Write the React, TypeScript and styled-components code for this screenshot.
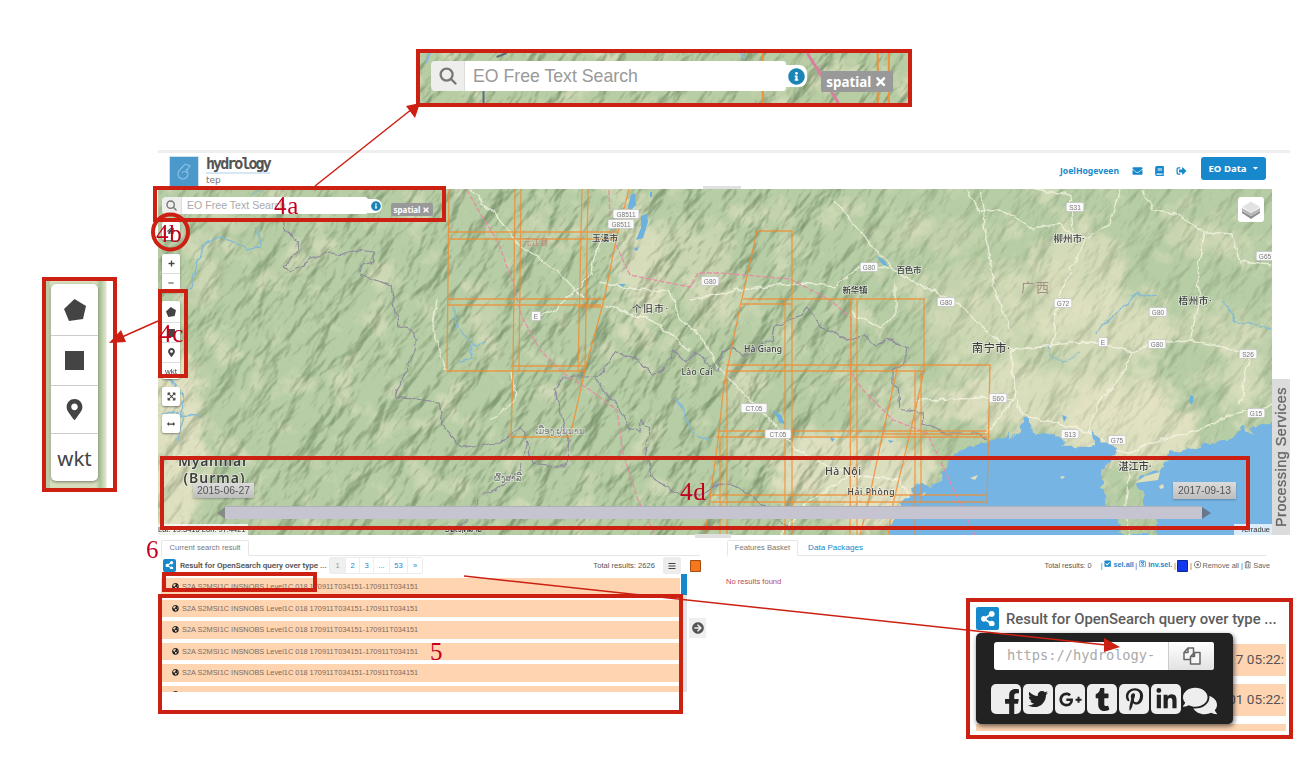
import React from "react";
import styled, { createGlobalStyle, css } from "styled-components";
import {
  FaSearch, FaInfoCircle, FaShareAlt, FaFacebookF, FaTwitter, FaTumblr, FaPinterestP,
  FaLinkedinIn, FaComments, FaEnvelope, FaBook, FaSignOutAlt, FaBars, FaMapMarkerAlt,
  FaGlobeAmericas, FaTimes, FaPlus, FaMinus, FaCaretDown,
  FaExpandArrowsAlt, FaRegTrashAlt, FaRegSave, FaCheckSquare, FaArrowCircleRight, FaRegDotCircle,
  FaGooglePlusG, FaArrowsAltH, FaHome,
} from "react-icons/fa";

const RED = "#cc2013";
const BLUE = "#1788cb";
const PEACH = "#fed4b1";

const Global = createGlobalStyle`
  * { box-sizing: border-box; }
  body { margin: 0; background: #fff; font-family: "Liberation Sans", sans-serif; }
`;

const Page = styled.main`
  position: relative;
  width: 1314px;
  height: 774px;
  padding: 150px 0 0 158px;
  overflow: hidden;
  background: #fff;
`;

/* ---------- header ---------- */
const Header = styled.header`
  display: flex;
  align-items: center;
  width: 1132px;
  height: 39px;
  padding: 0 24px 0 12px;
  border-top: 3px solid #eee;
`;
const Logo = styled.div`
  width: 28px;
  height: 29px;
  padding: 3px;
  background: #4b98cb;
  box-shadow: 0 0 0 1px #cfe2ef;
`;
const Brand = styled.div`
  margin: -3px auto 0 8px;
  color: #555;
  line-height: 1;
`;
const BrandName = styled.div`
  height: 19px;
  font: 700 15px/19px "DejaVu Sans Mono", monospace;
  letter-spacing: -1.95px;
  border-bottom: 2px solid #d5e6f4;
`;
const BrandSub = styled.div`
  margin-top: 1px;
  font: 9px/10px "DejaVu Sans", sans-serif;
  color: #777;
`;
const UserNav = styled.nav`
  display: flex;
  align-items: center;
  color: ${BLUE};
  font: 700 8.6px "Noto Sans", sans-serif;
  > svg { width: 11px; height: 10px; margin-left: 11px; }
  > svg:first-of-type { margin-left: 13px; }
  > svg:last-of-type { margin-right: 14px; }
`;
const DataButton = styled.button`
  display: flex;
  align-items: center;
  justify-content: center;
  gap: 5px;
  width: 65px;
  height: 23px;
  margin-top: -6px;
  padding: 0;
  border: 0;
  border-radius: 3px;
  background: ${BLUE};
  color: #fff;
  font: 700 9.6px "Noto Sans", sans-serif;
  svg { width: 7px; height: 8px; }
`;

/* ---------- map ---------- */
const MapRow = styled.div`
  display: flex;
  align-items: flex-end;
  height: 346px;
`;
const MapView = styled.section`
  position: relative;
  width: 1114px;
  height: 346px;
`;
const MapCanvas = styled.svg`
  position: absolute;
  inset: 0;
  width: 100%;
  height: 100%;
`;
const SideTab = styled.aside`
  display: flex;
  align-items: center;
  justify-content: center;
  width: 18px;
  height: 156px;
  background: #dcdcdc;
  color: #666;
  font: 14.4px/18px "Liberation Sans", sans-serif;
  letter-spacing: 0.5px;
  -webkit-text-stroke: 0.3px #666;
  writing-mode: vertical-rl;
  transform: rotate(180deg);
  white-space: nowrap;
`;
const Handle = styled.i<{ $x: number; $y: number; $w: number; $h: number }>`
  position: absolute;
  left: ${(p) => p.$x}px;
  top: ${(p) => p.$y}px;
  width: ${(p) => p.$w}px;
  height: ${(p) => p.$h}px;
  background: #e0e0e0;
`;
const MapSearch = styled.div`
  position: absolute;
  left: 4px;
  top: 8px;
`;
const MapControls = styled.div`
  position: absolute;
  left: 4px;
  top: 33px;
  display: flex;
  flex-direction: column;
`;
const ControlGroup = styled.div<{ $gap?: number }>`
  display: flex;
  flex-direction: column;
  width: 18px;
  margin-bottom: ${(p) => p.$gap ?? 8}px;
  border-radius: 2px;
  background: #fff;
  box-shadow: 0 1px 2px rgba(0, 0, 0, 0.4);
`;
const Control = styled.button<{ $h?: number }>`
  display: flex;
  align-items: center;
  justify-content: center;
  height: ${(p) => p.$h ?? 19}px;
  padding: 0;
  border: 0;
  background: none;
  color: #444;
  font: 8px "Liberation Sans", sans-serif;
  & + & { border-top: 1px solid #ddd; }
`;
const LayersButton = styled.button`
  position: absolute;
  right: 8px;
  top: 8px;
  display: grid;
  place-items: center;
  width: 26px;
  height: 25px;
  padding: 0;
  border: 0;
  border-radius: 3px;
  background: #fff;
`;
const TimeLabel = styled.div<{ $x: number; $y: number; $w: number; $h: number }>`
  position: absolute;
  left: ${(p) => p.$x}px;
  top: ${(p) => p.$y}px;
  width: ${(p) => p.$w}px;
  height: ${(p) => p.$h}px;
  background: linear-gradient(#dcdcdc, #bdbdbd);
  color: #555;
  font: 10.4px/${(p) => p.$h}px "Liberation Sans", sans-serif;
  text-align: center;
  box-shadow: 0 1px 2px rgba(0, 0, 0, 0.25);
`;
const TimeBar = styled.div`
  position: absolute;
  left: 67px;
  top: 317px;
  width: 977px;
  height: 13px;
  background: #c5c4d0;
  border-top: 1px solid #aeb0b8;
  &::before, &::after {
    content: "";
    position: absolute;
    top: 0;
    border: 6px solid transparent;
  }
  &::before { left: -8px; border-left: 0; border-right: 8px solid #858c84; }
  &::after { right: -9px; border-right: 0; border-left: 9px solid #66798a; }
`;
const Attribution = styled.div<{ $right?: boolean }>`
  position: absolute;
  bottom: 0;
  ${(p) => (p.$right ? css`right: 0; width: 38px; text-align: right; padding-right: 2px;` : css`left: 0; width: 90px;`)}
  height: 11px;
  overflow: hidden;
  background: rgba(255, 255, 255, 0.75);
  color: #333;
  font: 7.5px/11px "Liberation Sans", sans-serif;
  white-space: nowrap;
`;

/* ---------- search widget, drawn small on the map and large in its callout ---------- */
const Search = styled.div<{ $big?: boolean }>`
  display: flex;
  align-items: center;
  height: ${(p) => (p.$big ? 30 : 17)}px;
`;
const SearchIcon = styled.span<{ $big?: boolean }>`
  display: grid;
  place-items: center;
  flex: none;
  width: ${(p) => (p.$big ? 34 : 20)}px;
  height: 100%;
  border-right: 1px solid #ddd;
  border-radius: 4px 0 0 4px;
  background: #eeeeec;
  color: #777;
`;
const SearchInput = styled.span<{ $big?: boolean }>`
  flex: none;
  width: ${(p) => (p.$big ? 321 : 186)}px;
  height: 100%;
  padding-left: ${(p) => (p.$big ? 8 : 5)}px;
  border-radius: 0 3px 3px 0;
  background: #fff;
  color: ${(p) => (p.$big ? "#999" : "#aaa")};
  font: ${(p) => (p.$big ? "17.7px/30px" : "10.6px/17px")} "Liberation Sans", sans-serif;
  white-space: nowrap;
`;
const SearchInfo = styled.span<{ $big?: boolean }>`
  display: flex;
  align-items: center;
  justify-content: flex-end;
  flex: none;
  width: ${(p) => (p.$big ? 21 : 14)}px;
  height: ${(p) => (p.$big ? 22 : 14)}px;
  padding-right: ${(p) => (p.$big ? 2 : 1)}px;
  border-radius: 0 8px 8px 0;
  background: #fff;
  color: #1a84b4;
  font-size: ${(p) => (p.$big ? 17 : 10)}px;
`;
const Badge = styled.span<{ $big?: boolean }>`
  display: flex;
  align-items: center;
  justify-content: center;
  flex: none;
  gap: ${(p) => (p.$big ? 3 : 2)}px;
  width: ${(p) => (p.$big ? 72 : 42)}px;
  height: ${(p) => (p.$big ? 21 : 13)}px;
  margin: ${(p) => (p.$big ? "11px 0 0 14px" : "8px 0 0 9px")};
  border-radius: 2px;
  background: #999;
  color: #fff;
  font: 700 ${(p) => (p.$big ? "13.4px" : "8px")} "Noto Sans", sans-serif;
`;

function SearchBox({ big }: { big?: boolean }) {
  const s = big ? 18 : 11;
  return (
    <Search $big={big}>
      <SearchIcon $big={big}>
        <svg width={s} height={s} viewBox="0 0 18 18" fill="none" stroke="#777" strokeWidth="2.3" strokeLinecap="round">
          <circle cx="7.6" cy="7.6" r="6" /><path d="M12 12 16.5 16.5" />
        </svg>
      </SearchIcon>
      <SearchInput $big={big}>EO Free Text Search</SearchInput>
      <SearchInfo $big={big}><FaInfoCircle /></SearchInfo>
      <Badge $big={big}>spatial <FaTimes /></Badge>
    </Search>
  );
}

/* ---------- bottom panels ---------- */
const Panels = styled.div`
  display: flex;
  padding-top: 5px;
  color: #666;
  font: 7.6px "Liberation Sans", sans-serif;
`;
const Panel = styled.section<{ $w: number; $ml?: number }>`
  width: ${(p) => p.$w}px;
  margin-left: ${(p) => p.$ml ?? 0}px;
`;
const Tabs = styled.div`
  display: flex;
  width: 539px;
  height: 16px;
  border-bottom: 1px solid #e6e6e6;
`;
const Tab = styled.span<{ $w: number; $active?: boolean }>`
  width: ${(p) => p.$w}px;
  height: 16px;
  line-height: 14px;
  text-align: center;
  white-space: nowrap;
  color: ${(p) => (p.$active ? "#777" : BLUE)};
  ${(p) => (p.$active ? css`border: 1px solid #e6e6e6; border-bottom-color: #fff; border-radius: 2px 2px 0 0;` : css`padding-top: 1px; font-size: 8.1px;`)}
`;
const Toolbar = styled.div`
  display: flex;
  align-items: center;
  height: 18px;
  white-space: nowrap;
`;
const ShareIcon = styled.span<{ $s: number }>`
  display: grid;
  place-items: center;
  width: ${(p) => p.$s}px;
  height: ${(p) => p.$s}px;
  border-radius: 2px;
  background: ${BLUE};
  color: #fff;
  font-size: ${(p) => p.$s * 0.68}px;
`;
const ResultTitle = styled.span`
  width: 153px;
  padding-left: 4px;
  color: #555;
  font: 500 8.05px Roboto, sans-serif;
  -webkit-text-stroke: 0.1px #555;
`;
const Pager = styled.div`
  display: flex;
  height: 17px;
  border: 1px solid #ececec;
  border-radius: 2px;
`;
const PageNo = styled.span<{ $w: number; $on?: boolean }>`
  width: ${(p) => p.$w}px;
  line-height: 16px;
  text-align: center;
  color: ${(p) => (p.$on ? "#999" : BLUE)};
  background: ${(p) => (p.$on ? "#f0f0f0" : "#fff")};
  & + & { border-left: 1px solid #eee; }
`;
const Total = styled.span`
  margin-left: auto;
  color: #555;
`;
const ListButton = styled.button`
  display: grid;
  place-items: center;
  width: 18px;
  height: 17px;
  margin: 1px 9px 0 8px;
  padding: 0;
  border: 0;
  border-radius: 2px;
  background: #ececec;
  color: #444;
  font-size: 8px;
`;
const Swatch = styled.i<{ $c: string }>`
  width: 11px;
  height: 12px;
  margin-top: 1px;
  border: 1px solid rgba(0, 0, 0, 0.35);
  border-radius: 1px;
  background: ${(p) => p.$c};
`;
const ResultArea = styled.div`
  display: flex;
  height: 118px;
`;
const Rows = styled.ul`
  display: flex;
  flex-direction: column;
  gap: 4px;
  width: 519px;
  height: 114px;
  margin: 4px 1px 0 0;
  padding: 0;
  overflow: hidden;
  list-style: none;
`;
const Row = styled.li`
  display: flex;
  flex: none;
  align-items: center;
  gap: 3px;
  height: 17.5px;
  padding-left: 11px;
  background: ${PEACH};
  color: #7b6c62;
  font-size: 7.36px;
  white-space: nowrap;
  svg { color: #222; width: 7px; height: 7px; }
`;
const Scroll = styled.div`
  width: 6px;
  height: 118px;
  background: linear-gradient(${BLUE} 0 21px, #e2e2e2 21px);
`;
const MoveButton = styled.button`
  align-self: flex-start;
  display: grid;
  place-items: center;
  width: 17px;
  height: 20px;
  margin: 44px 0 0 2px;
  padding: 0;
  border: 0;
  background: #efefef;
  color: #555;
  font-size: 12px;
`;
const Empty = styled.p`
  margin: 3px 0 0 -1px;
  color: #b94a5c;
`;
const BasketTools = styled.span`
  display: flex;
  align-items: center;
  gap: 1.6px;
  margin: 0 -4px 0 9px;
  b { color: ${BLUE}; }
`;
const Compact = styled(Toolbar)`
  font-size: 7.3px;
`;

/* ---------- figure annotations ---------- */
interface Rect { $x: number; $y: number; $w: number; $h: number }
const Frame = styled.div<Rect & { $fill?: boolean }>`
  position: absolute;
  left: ${(p) => p.$x}px;
  top: ${(p) => p.$y}px;
  width: ${(p) => p.$w}px;
  height: ${(p) => p.$h}px;
  border: 4px solid ${RED};
  ${(p) => p.$fill && css`background: #fff;`}
`;
const Label = styled.span<{ $x: number; $y: number }>`
  position: absolute;
  left: ${(p) => p.$x}px;
  top: ${(p) => p.$y}px;
  color: #c4001a;
  font: 25px/26px "Liberation Serif", serif;
  letter-spacing: 0.8px;
`;
const Overlay = styled.svg`
  position: absolute;
  left: 0;
  top: 0;
  pointer-events: none;
`;
const SearchCallout = styled(Frame)`
  z-index: 0;
  padding: 8px 0 0 11px;
`;
const CalloutCanvas = styled(MapCanvas)`
  z-index: -1;
`;
const ToolCallout = styled(Frame)`
  padding: 3px 0 0 5px;
  background: linear-gradient(90deg, #bccba5 0 4px, #d7ddbd 4px 50px, #a9c49a 54px, #e3e5cc 60px, #fff 61px);
`;
const Tools = styled.div`
  width: 47px;
  border-radius: 5px;
  background: #fff;
  box-shadow: 0 1px 3px rgba(0, 0, 0, 0.45);
`;
const Tool = styled.div<{ $h: number }>`
  display: grid;
  place-items: center;
  height: ${(p) => p.$h}px;
  color: #444;
  font: 20.5px "Noto Sans", sans-serif;
  & + & { border-top: 1px solid #ccc; }
`;
const ShareCallout = styled(Frame)`
  padding: 5px 3px 0 6px;
`;
const ShareTitle = styled.div`
  display: flex;
  align-items: center;
  gap: 7px;
  height: 23px;
  margin-bottom: 14px;
  color: #5c5c5c;
  font: 500 14.85px Roboto, sans-serif;
  white-space: nowrap;
`;
const ShareRow = styled.div<{ $h: number }>`
  height: ${(p) => p.$h}px;
  margin-bottom: 8px;
  padding-right: 2px;
  background: ${PEACH};
  color: #555;
  font: 13.6px/${(p) => p.$h - 2}px Roboto, sans-serif;
  text-align: right;
`;
const Popover = styled.div`
  position: absolute;
  left: 6px;
  top: 31px;
  width: 257px;
  height: 91px;
  padding: 9px 15px 0 18px;
  border-radius: 5px;
  background: #222;
  box-shadow: 1px 2px 5px rgba(0, 0, 0, 0.6);
`;
const UrlField = styled.div`
  display: flex;
  width: 220px;
  height: 28px;
  overflow: hidden;
  border-radius: 3px;
  background: #fff;
  color: #aaa;
  font: 13.7px/27px "DejaVu Sans Mono", monospace;
  span { width: 174px; padding-left: 13px; }
`;
const CopyButton = styled.button`
  display: grid;
  place-items: center;
  width: 46px;
  padding: 0;
  border: 0;
  border-left: 1px solid #ccc;
  background: linear-gradient(#fff, #e2e2e2);
`;
const Socials = styled.div`
  display: flex;
  gap: 2px;
  margin: 14px 0 0 -3px;
`;
const Social = styled.span`
  display: grid;
  place-items: center;
  flex: none;
  width: 30px;
  height: 30px;
  border-radius: 5px;
  background: #eee;
  color: #222;
  font-size: 23px;
  &:first-child { padding: 5px 0 0 8px; font-size: 26px; overflow: hidden; }
  &:last-child { width: 34px; background: none; color: #eee; font-size: 34px; }
`;

/* ---------- map content ---------- */
const LANDS: [number, number, number, number, number][] = [
  [175, 440, 28, 100, 0.9], [220, 215, 22, 9, 0.5], [205, 270, 8, 45, 0.6], [310, 262, 28, 5, 0.4], [640, 270, 22, 75, 0.7],
  [690, 250, 40, 28, 0.45], [720, 300, 36, 30, 0.4], [990, 340, 60, 50, 0.35], [1080, 270, 46, 50, 0.65], [1110, 330, 70, 35, 0.7],
  [1205, 235, 40, 12, 0.5], [1060, 400, 110, 35, 0.75], [1130, 430, 70, 40, 0.9], [1180, 330, 90, 18, 0.3], [850, 470, 80, 38, 0.85],
  [900, 510, 55, 28, 0.95], [800, 440, 42, 12, 0.5], [920, 410, 70, 16, 0.5], [1245, 370, 20, 45, 0.6], [1000, 300, 90, 40, 0.3],
  [740, 395, 12, 50, 0.3], [480, 320, 12, 40, 0.3], [540, 230, 40, 10, 0.3], [930, 235, 80, 10, 0.3],
];
const ROADS = [
  "M965 189 976 205 980 212 1000 210 1012 215 1030 228 1060 224 1068 232 1085 240 1111 222 1120 189",
  "M1085 240 1082 250 1070 270 1058 300 1052 345 1012 350",
  "M1143 189 1152 210 1180 216 1205 233 1232 235 1240 262 1272 265",
  "M1205 233 1197 270 1200 300 1190 340 1175 343 1160 342 1132 352 1118 380 1100 400 1088 432",
  "M1012 350 1060 343 1100 342 1132 352 M1190 340 1215 345 1232 350 1250 355 1245 375 1240 405",
  "M1012 350 1014 395 1022 415 1060 425 1090 432 1125 455 1160 440 1200 430 1230 415 1272 405",
  "M1012 350 985 330 960 305 935 292 900 275 880 255 850 220 835 200",
  "M895 282 895 315 882 328 860 318 852 310 M835 285 845 280 860 267 894 268",
  "M600 282 640 290 670 292 680 320 700 335 722 372 770 420 800 452 850 475 860 510",
  "M605 230 590 275 575 292 555 310 537 316 M690 300 740 290 800 283 835 286",
  "M470 189 495 215 520 245 555 270 585 300 M690 350 650 320 605 305",
  "M1012 350 1014 400 985 435 M915 400 990 398 1014 400 M1035 189 1070 195 1073 230",
  "M850 475 900 480 920 520 M850 475 810 500 780 535",
  "M1130 465 1126 500 1128 535 M980 189 984 215 990 260 995 290 1010 330",
  "M512 370 515 400 490 420 M448 371 432 330 437 300",
];
const ORANGE = [
  "M449 189 447 371H585 M515 189 513 371 511 437H569 M521 189 519 371 M582 189 578 372 M588 189 585 370",
  "M629 189 616 240 604 300 585 370 570 437 M448 232H618 M448 239H616 M448 299H603 M448 305H601 M513 366H585 M578 307H601",
  "M757 231H792V535 M757 231 741 303 724 384 718 440 705 535 M785 299V535",
  "M743 299H924V371 M741 304H792 M726 365H990L987 504 M726 371H924 M851 299 850 535 M857 299V535",
  "M718 431H987 M716 437H987 M712 495H986 M711 502H986 M720 437V535 M727 371V535",
  "M898 365 882 437 868 504 860 535 M924 371 912 425 893 504 888 535 M915 371V535 M921 371V503 M882 434H987",
];
const BORDERS = [
  "M283 220 285 228 297 240 298 250 283 268 291 272 310 258 330 253 345 255 355 250 375 252 371 262 360 266 362 275 391 287 399 327 413 330 417 347 406 370 395 397 439 402 443 427 462 447 480 445 499 443 521 427 527 440 532 463 566 467 569 440 554 390 563 377 588 377 600 375 617 352 640 362 653 374 665 368 673 350 686 363 694 352 718 371 722 352 733 347 743 357 763 343 773 340 775 325 802 315 807 307 823 328 847 340 863 336 875 345 890 339 908 348 903 365 892 370 892 383 898 387 900 408 922 413 923 422 947 433 977 433 987 441",
  "M594 378 605 392 617 405 630 430 640 431 641 420 650 427 645 447 653 480 675 492 700 497 720 482 740 488 762 505 790 530",
  "M478 500 466 520 452 535 M527 440 521 470 495 490 480 495",
];
const SEA =
  "M888 535 893 519 903 503 917 483 928 486 940 480 945 468 952 455 960 450 975 446 987 442 1000 437 1010 433 1010 441 1020 430 1023 417 1027 417 1033 432 1045 434 1060 437 1066 443 1062 448 1080 447 1093 443 1092 430 1098 436 1103 443 1117 447 1115 457 1102 470 1102 490 1106 503 1117 513 1122 524 1118 535H1155L1157 520 1143 503 1148 497 1135 483 1137 477 1163 467 1170 453 1200 447 1213 443 1233 437 1243 425 1246 432 1257 435 1250 428 1285 420V550H888Z";
const LABELS: [string, number, number, number, number][] = [
  ["玉溪市", 605, 241, 8.5, 26], ["个旧市·", 650, 312, 9.5, 36], ["新华镇", 855, 293, 8.5, 25], ["百色市", 909, 273, 8.5, 25],
  ["柳州市·", 1069, 242, 9.5, 31], ["梧州市·", 1195, 304, 9.5, 33], ["南宁市·", 991, 352, 11, 38], ["湛江市·", 1135, 470, 10, 33],
  ["Hà Giang", 763, 352, 8.5, 38], ["Lào Cai", 697, 375, 8.5, 31], ["Hà Nội", 843, 475, 10.5, 36], ["Hải Phòng", 871, 495, 8.5, 47],
];
const SHIELDS: [string, number, number][] = [
  ["G8511", 626, 214], ["G8511", 621, 224], ["G80", 710, 281], ["G80", 869, 267], ["G80", 946, 302], ["G72", 1063, 303],
  ["S31", 1075, 207], ["G80", 1158, 312], ["G80", 1157, 344], ["G65", 1265, 256], ["S26", 1248, 354], ["G15", 1256, 413],
  ["G75", 1117, 440], ["S13", 1070, 434], ["S60", 998, 398], ["CT.05", 754, 408], ["CT.05", 778, 434], ["E", 536, 316], ["E", 1103, 342],
];

function Terrain() {
  return (
    <defs>
      <filter id="relief" x="0" y="0" width="100%" height="100%" colorInterpolationFilters="sRGB">
        <feTurbulence type="fractalNoise" baseFrequency="0.02 0.048" numOctaves="4" seed="8" />
        <feColorMatrix values="0 0 0 0 0  0 0 0 0 0  0 0 0 0 0  1 0 0 0 0" />
        <feDiffuseLighting surfaceScale="11" diffuseConstant="1.12" lightingColor="#fff">
          <feDistantLight azimuth="250" elevation="62" />
        </feDiffuseLighting>
        <feColorMatrix values=".5 0 0 0 .51  0 .42 0 0 .59  0 0 .5 0 .51  0 0 0 1 0" />
      </filter>
      <linearGradient id="fade" x1="158" x2="1272" y1="0" y2="90" gradientUnits="userSpaceOnUse">
        <stop offset="0" stopColor="#999" />
        <stop offset=".15" stopColor="#ddd" />
        <stop offset=".58" stopColor="#fff" />
        <stop offset=".72" stopColor="#777" />
        <stop offset="1" stopColor="#777" />
      </linearGradient>
      <mask id="height" maskUnits="userSpaceOnUse" x="158" y="189" width="1114" height="346">
        <rect x="158" y="189" width="1114" height="346" fill="url(#fade)" />
      </mask>
      <filter id="patches" x="0" y="0" width="100%" height="100%" colorInterpolationFilters="sRGB">
        <feTurbulence type="fractalNoise" baseFrequency="0.03" numOctaves="4" seed="21" />
        <feColorMatrix values="0 0 0 0 .89  0 0 0 0 .89  0 0 0 0 .77  5 0 0 0 -2.75" />
      </filter>
      <filter id="soft" x="-50%" y="-50%" width="200%" height="200%" colorInterpolationFilters="sRGB">
        <feGaussianBlur stdDeviation="6" result="b" />
        <feTurbulence type="fractalNoise" baseFrequency="0.05" numOctaves="3" seed="3" result="n" />
        <feDisplacementMap in="b" in2="n" scale="40" xChannelSelector="R" yChannelSelector="G" />
      </filter>
      <filter id="coast" colorInterpolationFilters="sRGB">
        <feTurbulence type="fractalNoise" baseFrequency="0.12" numOctaves="2" seed="5" result="n" />
        <feDisplacementMap in="SourceGraphic" in2="n" scale="9" xChannelSelector="R" yChannelSelector="G" />
      </filter>
      <filter id="wobble" colorInterpolationFilters="sRGB">
        <feTurbulence type="fractalNoise" baseFrequency="0.1" numOctaves="2" seed="9" result="n" />
        <feDisplacementMap in="SourceGraphic" in2="n" scale="7" xChannelSelector="R" yChannelSelector="G" />
      </filter>
    </defs>
  );
}

function RegionMap() {
  return (
    <MapCanvas viewBox="158 189 1114 346">
      <Terrain />
      <rect x="158" y="189" width="1114" height="346" fill="#b7cda5" />
      <rect x="158" y="189" width="1114" height="346" filter="url(#patches)" opacity="0.5" />
      <g filter="url(#soft)">
        {LANDS.map(([x, y, rx, ry, o], i) => (
          <ellipse key={i} cx={x} cy={y} rx={rx} ry={ry} fill="#e3e2c3" opacity={o} />
        ))}
      </g>
      <g style={{ mixBlendMode: "multiply" }} mask="url(#height)">
        <rect x="-200" y="-250" width="1700" height="1300" filter="url(#relief)" transform="rotate(-52 700 360)" opacity="0.72" />
      </g>
      <g fill="none" stroke="#fbf9ea" strokeWidth="1.4" opacity="0.7" filter="url(#wobble)">
        {ROADS.map((d) => <path key={d} d={d} />)}
      </g>
      <path d={SEA} fill="#76b5e3" filter="url(#coast)" />
      <path d="M1135 483 1145 476 1160 472 1158 480 1143 482Z M1159 486l4-2 1 4-4 1Z M1060 477l3-1 2 1-3 2Z M970 478l8-3-3 5Z M920 495l6-3-2 4Z" fill="#dde0bb" />
      <g fill="#6db2df">
        <path d="M631 195 635 193 636 205 630 211 628 207Z M641 216 647 214 648 222 643 238 636 240 641 228Z M633 249l6-2-2 4Z M618 284l8 0-3 3Z M650 192l2 0 0 5-2 0Z M773 410 781 415 785 424 780 423Z" />
        <path d="M830 437l5 2-3 3Z M888 440l6 1-4 2Z M1190 395l4 2-2 8-3-3Z M1062 415l5 2-3 5Z M876 256l8 4 4 6-5-1Z" />
      </g>
      <g fill="none" stroke="#84bbd2" strokeWidth="1.4" filter="url(#wobble)">
        <path d="M190 290 198 262 203 245 221 236 232 242 247 250 259 247 260 237 254 228" />
        <path d="M452 305 458 325 468 340 472 358 460 361 M472 346 485 343 M676 398 690 427 697 435 710 440" />
        <path d="M169 378 182 395 183 415 178 440 M160 413 200 415 M1095 333 1115 315 1138 293 1155 297 M1225 301 1235 322 1272 329" />
        <path d="M1048 345 1052 358 1066 362 1080 352 M250 196 262 191" opacity=".7" />
      </g>
      <g fill="none" stroke="#8d8a9c" strokeWidth="1.2" filter="url(#wobble)">
        {BORDERS.map((d) => <path key={d} d={d} />)}
      </g>
      <g fill="none" stroke="#e68da5" strokeWidth="1.3" strokeDasharray="5 2">
        <path d="M467 190 480 213 498 242 513 283 522 317 540 350 563 373 590 390 617 410 623 453 638 500 655 535" />
        <path d="M609 190 610 223 617 247 630 275 690 287 698 273H720L790 279 830 300 851 318V373L863 390 893 420 927 433 940 460 957 497 975 535" />
      </g>
      <g fill="none" stroke="#f58a2b" strokeWidth="1.3" opacity="0.78">
        {ORANGE.map((d) => <path key={d} d={d} />)}
      </g>
      {SHIELDS.map(([t, x, y], i) => {
        const w = t.length * 4.2 + 5;
        return (
          <g key={i}>
            <rect x={x - w / 2} y={y - 4.5} width={w} height="9" rx="1.5" fill="#fafafa" stroke="#bbb" strokeWidth="0.6" />
            <text x={x} y={y + 2.5} fontSize="6.5" fill="#777" textAnchor="middle" fontFamily="Liberation Sans, sans-serif">{t}</text>
          </g>
        );
      })}
      <g fill="#3f3f42" textAnchor="middle" fontWeight="500" fontFamily="'Noto Sans', 'Noto Sans CJK SC', sans-serif" stroke="#fff" strokeOpacity=".5" strokeWidth="1.6" paintOrder="stroke">
        {LABELS.map(([t, x, y, s, w]) => <text key={t} x={x} y={y} fontSize={s} textLength={w}>{t}</text>)}
        <text x="213" y="466" fontSize="14" textLength="70" fontWeight="600">Myanmar</text>
        <text x="214" y="483" fontSize="14" textLength="61" fontWeight="600">(Burma)</text>
        <text x="463" y="532" fontSize="8">ປະເທດລາວ</text>
        <text x="508" y="481" fontSize="9" fill="#777">ຜົ້ງສາລີ</text>
        <text x="560" y="434" fontSize="9" fill="#888">ເມືອງ ຢູນນານ</text>
      </g>
      <text x="1021" y="292" fontSize="13" fill="#a08f86" fontFamily="'Noto Sans CJK SC', sans-serif" textLength="28">广西</text>
      <text x="523" y="245" fontSize="8" fill="#c07f7c" fontFamily="'Noto Sans CJK SC', sans-serif" textLength="25">元江县</text>
    </MapCanvas>
  );
}

const RESULT = "S2A S2MSI1C INSNOBS Level1C 018 170911T034151-170911T034151";

const Pentagon = ({ size }: { size: number }) => (
  <svg width={size} height={size} viewBox="0 0 22 22"><path fill="#444" d="M10.5 0 22 7 19 20 5 22 0 10Z" /></svg>
);
const Square = ({ size }: { size: number }) => (
  <svg width={size} height={size} viewBox="0 0 20 20"><path fill="#444" d="M0 0H20V20H0Z" /></svg>
);

export default function App() {
  return (
    <Page>
      <Global />
      <Header>
        <Logo>
          <svg width="22" height="22" viewBox="0 0 22 22" fill="none" stroke="#8cc0e3" strokeWidth="1.2">
            <path d="M12 4C9 8 5 10 5 14a5 5 0 0 0 10 0c0-2-1-3-2-5 M12 4l5 2-3 4 M9 13c1-2 4-2 5 0" />
          </svg>
        </Logo>
        <Brand>
          <BrandName>hydrology</BrandName>
          <BrandSub>tep</BrandSub>
        </Brand>
        <UserNav>
          JoelHogeveen
          <FaEnvelope /><FaBook /><FaSignOutAlt />
          <DataButton>EO Data <FaCaretDown /></DataButton>
        </UserNav>
      </Header>

      <MapRow>
        <MapView>
          <RegionMap />
          <Handle $x={545} $y={-3} $w={38} $h={3} />
          <Handle $x={537} $y={345} $w={36} $h={4} />
          <MapSearch><SearchBox /></MapSearch>
          <MapControls>
            <ControlGroup $gap={14}><Control $h={18}><FaHome /></Control></ControlGroup>
            <ControlGroup $gap={9}>
              <Control><FaPlus size={7} /></Control>
              <Control><FaMinus size={6} /></Control>
            </ControlGroup>
            <ControlGroup $gap={8}>
              <Control $h={21}><Pentagon size={10} /></Control>
              <Control $h={20}><Square size={8} /></Control>
              <Control $h={20}><FaMapMarkerAlt size={9} /></Control>
              <Control $h={17}>wkt</Control>
            </ControlGroup>
            <ControlGroup><Control><FaExpandArrowsAlt size={9} /></Control></ControlGroup>
            <ControlGroup><Control><FaArrowsAltH size={8} /></Control></ControlGroup>
          </MapControls>
          <LayersButton>
            <svg width="20" height="20" viewBox="0 0 20 20">
              <path d="M1 11 10 16 19 11V13L10 19 1 13Z" fill="#8f8f8f" />
              <path d="M1 8 10 13 19 8V11L10 16 1 11Z" fill="#b8b8b8" />
              <path d="M1 7 10 1.5 19 7 10 12.5Z" fill="#e2e2e2" />
            </svg>
          </LayersButton>
          <TimeLabel $x={35} $y={294} $w={61} $h={15}>2015-06-27</TimeLabel>
          <TimeLabel $x={1015} $y={293} $w={63} $h={17}>2017-09-13</TimeLabel>
          <TimeBar />
          <Attribution>Lat: 19.5415 Lon: 97.4421</Attribution>
          <Attribution $right>Terradue</Attribution>
        </MapView>
        <SideTab>Processing Services</SideTab>
      </MapRow>

      <Panels>
        <Panel $w={550} $ml={3}>
          <Tabs><Tab $w={88} $active>Current search result</Tab></Tabs>
          <Toolbar>
            <i style={{ width: 2 }} />
            <ShareIcon $s={13}><FaShareAlt /></ShareIcon>
            <ResultTitle>Result for OpenSearch query over type ...</ResultTitle>
            <Pager>
              <PageNo $w={15} $on>1</PageNo><PageNo $w={14}>2</PageNo><PageNo $w={14}>3</PageNo>
              <PageNo $w={16}>...</PageNo><PageNo $w={18}>53</PageNo><PageNo $w={15}>»</PageNo>
            </Pager>
            <Total>Total results: 2626</Total>
            <ListButton><FaBars /></ListButton>
            <Swatch $c="#f7771c" />
            <i style={{ width: 10 }} />
          </Toolbar>
          <ResultArea>
            <Rows>
              {[0, 1, 2, 3, 4, 5].map((i) => <Row key={i}><FaGlobeAmericas />{RESULT}</Row>)}
            </Rows>
            <Scroll />
            <MoveButton><FaArrowCircleRight /></MoveButton>
          </ResultArea>
        </Panel>
        <Panel $w={539} $ml={16}>
          <Tabs><Tab $w={71} $active>Features Basket</Tab><Tab $w={75}>Data Packages</Tab></Tabs>
          <Compact>
            <Total>Total results: 0</Total>
            <BasketTools>
              | <b><FaCheckSquare /> sel.all</b> | <b><FaRegSave /> inv.sel.</b> |
              <Swatch $c="#1238ee" /> | <FaRegDotCircle /> Remove all | <FaRegTrashAlt /> Save
            </BasketTools>
          </Compact>
          <Empty>No results found</Empty>
        </Panel>
      </Panels>

      <SearchCallout $x={416} $y={49} $w={496} $h={58} $fill>
        <CalloutCanvas viewBox="430 190 484 50" preserveAspectRatio="none">
          <rect x="430" y="190" width="484" height="50" fill="#b9cda5" />
          <rect x="430" y="190" width="484" height="50" filter="url(#patches)" opacity="0.6" />
          <g style={{ mixBlendMode: "multiply" }}>
            <rect x="330" y="-60" width="700" height="600" filter="url(#relief)" transform="rotate(-52 670 215)" opacity=".7" />
          </g>
          <g fill="none" strokeWidth="2">
            <path d="M770 190V240 M884 190V240 M895 190V240" stroke="#ef9136" />
            <path d="M814 190 834 222 845 240" stroke="#d87fa0" strokeWidth="3" />
            <path d="M506 194 516 190 M493 226V240" stroke="#5d6d7c" />
            <path d="M436 200 440 190 M748 190 752 196" stroke="#7fbbe0" />
          </g>
        </CalloutCanvas>
        <SearchBox big />
      </SearchCallout>

      <ToolCallout $x={42} $y={277} $w={75} $h={215}>
        <Tools>
          <Tool $h={51}><Pentagon size={22} /></Tool>
          <Tool $h={50}><Square size={19} /></Tool>
          <Tool $h={48}><FaMapMarkerAlt size={21} /></Tool>
          <Tool $h={48}>wkt</Tool>
        </Tools>
      </ToolCallout>

      <ShareCallout $x={966} $y={598} $w={327} $h={141} $fill>
        <ShareTitle><ShareIcon $s={23}><FaShareAlt /></ShareIcon>Result for OpenSearch query over type ...</ShareTitle>
        <ShareRow $h={32}>7 05:22:</ShareRow>
        <ShareRow $h={32}>01 05:22:</ShareRow>
        <ShareRow $h={7} />
        <Popover>
          <UrlField>
            <span>https://hydrology-</span>
            <CopyButton>
              <svg width="18" height="18" viewBox="0 0 18 18" fill="#f6f6f6" stroke="#666" strokeWidth="1.5" strokeLinejoin="round">
                <path d="M1 5.5 5 1H10.5V12.5H1Z M1 5.5H5V1" />
                <path d="M7.5 9.5 11.5 5.5H17V17H7.5Z M7.5 9.5H11.5V5.5" />
              </svg>
            </CopyButton>
          </UrlField>
          <Socials>
            <Social><FaFacebookF /></Social><Social><FaTwitter size={20} /></Social><Social><FaGooglePlusG /></Social>
            <Social><FaTumblr /></Social><Social><FaPinterestP /></Social><Social><FaLinkedinIn /></Social>
            <Social><FaComments /></Social>
          </Socials>
        </Popover>
      </ShareCallout>

      <Frame $x={153} $y={186} $w={293} $h={36} />
      <Frame $x={158} $y={289} $w={30} $h={89} />
      <Frame $x={160} $y={456} $w={1090} $h={74} />
      <Frame $x={162} $y={572} $w={155} $h={20} />
      <Frame $x={158} $y={594} $w={525} $h={120} />
      <Label $x={274} $y={193}>4a</Label>
      <Label $x={156} $y={221}>4b</Label>
      <Label $x={159} $y={321}>4c</Label>
      <Label $x={680} $y={479}>4d</Label>
      <Label $x={430} $y={639}>5</Label>
      <Label $x={146} $y={537}>6</Label>
      <Overlay width="1314" height="774" fill="none" stroke={RED} strokeWidth="1.5">
        <ellipse cx="170.5" cy="232" rx="17.5" ry="17.5" strokeWidth="4" />
        <path d="M315 186 412 109 M158 321 122 337 M464 576 1106 645" />
        <path d="M420 103 406 106 415 118Z M109 343 121 330 126 342Z M1120 647 1104 638V652Z" fill={RED} stroke="none" />
      </Overlay>
    </Page>
  );
}
